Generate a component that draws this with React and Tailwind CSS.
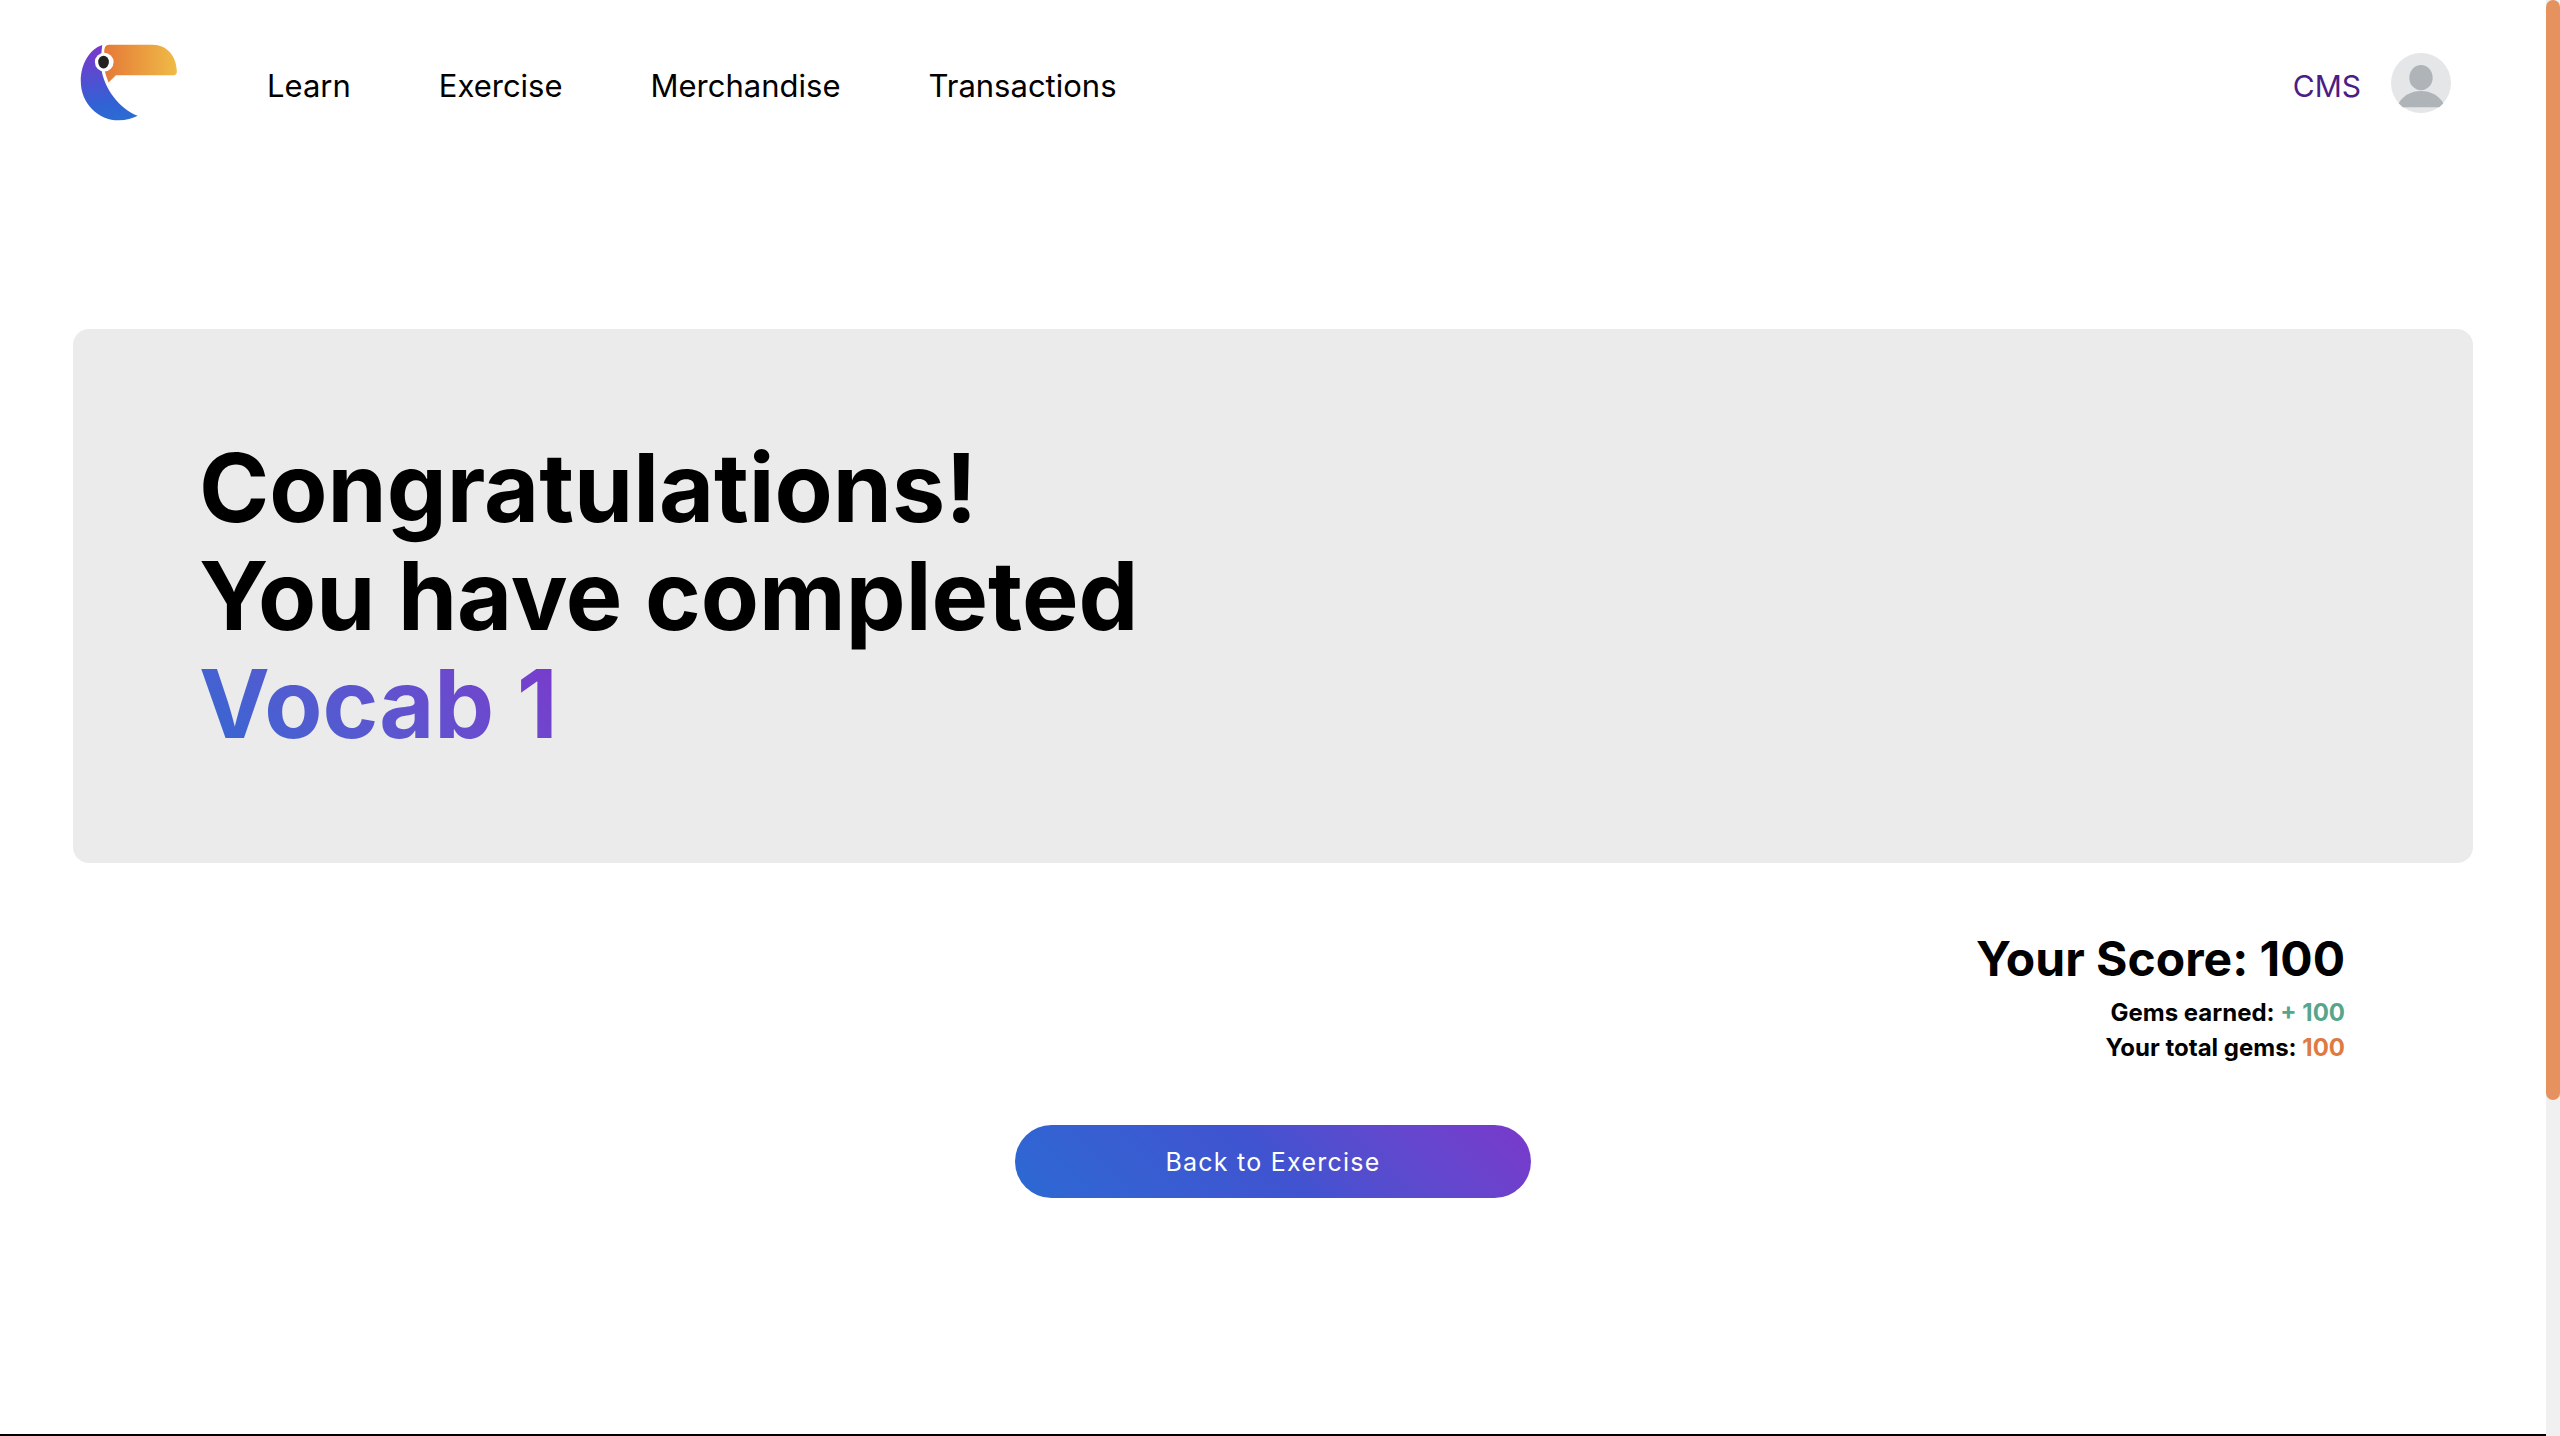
const links = ["Learn", "Exercise", "Merchandise", "Transactions"];

function Logo() {
  return (
    <svg viewBox="62 42 292 230" className="h-[77px] w-[98px]" aria-label="Toucan" role="img">
      <defs>
        <linearGradient id="beak" x1="0" y1="0" x2="1" y2="0">
          <stop offset="0" stopColor="#e57938" />
          <stop offset="1" stopColor="#efbb46" />
        </linearGradient>
        <linearGradient id="body" x1="0.5" y1="0" x2="0.6" y2="1">
          <stop offset="0" stopColor="#7a38cd" />
          <stop offset="0.75" stopColor="#3261d4" />
          <stop offset="1" stopColor="#2b6cd2" />
        </linearGradient>
      </defs>
      <path d="M128 45 C90 58 64 101 64 153 C64 219 115 270 178 270 C199 270 219 264 234 256 C182 238 131 173 125 112 C123 88 126 65 128 45Z" fill="url(#body)" />
      <path d="M147 44 H279 C321 44 350 78 351 124 Q351 135 341 135 H169 L147 157 C142 143 136 130 134 112 V62 Q135 44 147 44Z" fill="url(#beak)" />
      <circle cx="134" cy="96" r="28" fill="#fff" />
      <ellipse cx="132" cy="96" rx="16" ry="19" fill="#222" />
    </svg>
  );
}

function Avatar() {
  return (
    <svg viewBox="0 0 180 180" className="size-[60px]" aria-hidden="true">
      <circle cx="90" cy="90" r="90" fill="#e4e6e7" />
      <ellipse cx="90" cy="74" rx="35" ry="38" fill="#aeb4b7" />
      <path d="M23 151 C36 128 61 114 90 114 C119 114 144 128 157 151 L145 163 H35Z" fill="#aeb4b7" />
    </svg>
  );
}

export default function App() {
  return (
    <div className="flex min-h-screen bg-white font-[Inter,sans-serif] text-black">
      <div className="flex min-w-0 flex-1 flex-col">
        <header className="flex items-center px-20 pt-11">
          <a href="#home"><Logo /></a>
          <nav className="ml-[89px] flex gap-[88px] pt-1.5 text-[31px] leading-[44px]">
            {links.map((l) => (
              <a key={l} href={"#" + l.toLowerCase()}>{l}</a>
            ))}
          </nav>
          <div className="mr-[15px] ml-auto flex items-center gap-[30px]">
            <a href="#cms" className="pt-1.5 text-[30px] leading-[44px] text-[#4b1d86]">CMS</a>
            <button type="button" aria-label="Profile"><Avatar /></button>
          </div>
        </header>
        <main className="flex flex-1 flex-col px-[73px] pt-52">
          <section className="rounded-2xl bg-[#ebebeb] px-[126px] py-[105px]">
            <h1 className="text-[95px] leading-[108px] font-bold">
              Congratulations!
              <br />
              You have completed
              <br />
              <span className="bg-linear-45 from-[#2b69d3] to-[#7a38cb] bg-clip-text text-transparent">Vocab 1</span>
            </h1>
          </section>
          <section className="mt-[60px] pr-32 text-right font-bold">
            <h2 className="text-[48px] leading-[72px]">Your Score: 100</h2>
            <p className="text-[24px] leading-[35px]">Gems earned: <span className="text-[#57a68c]">+ 100</span></p>
            <p className="text-[24px] leading-[35px]">Your total gems: <span className="text-[#de7a42]">100</span></p>
          </section>
          <button type="button" className="mt-[60px] h-[73px] w-[516px] self-center rounded-full bg-linear-45 from-[#2b69d3] via-[#4053d0] to-[#7a38cb] text-[25px] leading-9 tracking-wider text-white">
            Back to Exercise
          </button>
        </main>
        <footer className="h-[2px] bg-black" />
      </div>
      <div className="w-[14px] bg-[#f0f0f0]">
        <div className="h-[1100px] rounded-full bg-[#e6925f]" />
      </div>
    </div>
  );
}
